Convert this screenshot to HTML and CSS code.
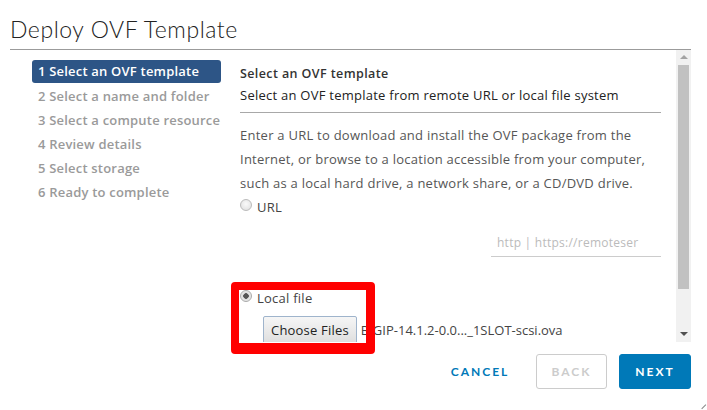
FILE: index.html
```html
<!DOCTYPE html>
<html>
<head>
<meta charset="utf-8">
<link rel="stylesheet" href="styles.css">
</head>
<body>
<div class="dialog">
  <header class="title">Deploy OVF Template</header>
  <div class="main">
    <nav class="steps">
      <div class="step active">1 Select an OVF template</div>
      <div class="step">2 Select a name and folder</div>
      <div class="step">3 Select a compute resource</div>
      <div class="step">4 Review details</div>
      <div class="step">5 Select storage</div>
      <div class="step">6 Ready to complete</div>
    </nav>
    <section class="panel">
      <div class="scroll">
        <div class="content">
          <h2 class="heading">Select an OVF template</h2>
          <p class="subtitle">Select an OVF template from remote URL or local file system</p>
          <p class="desc">Enter a URL to download and install the OVF package from the Internet, or browse to a location accessible from your computer, such as a local hard drive, a network share, or a CD/DVD drive.</p>
          <label class="radio-row"><span class="radio"></span>URL</label>
          <div class="url-row"><div class="url-input">http | https://remoteser</div></div>
          <label class="radio-row local"><span class="radio checked"></span>Local file</label>
          <div class="file-row"><span class="file-btn">Choose Files</span><span class="file-name">BIGIP-14.1.2-0.0..._1SLOT-scsi.ova</span></div>
        </div>
      </div>
      <div class="scrollbar">
        <span class="arrow up"></span>
        <div class="thumb"></div>
        <span class="arrow down"></span>
      </div>
    </section>
  </div>
  <footer class="actions">
    <button class="btn flat">CANCEL</button>
    <button class="btn outline">BACK</button>
    <button class="btn primary">NEXT</button>
  </footer>
  <div class="highlight"></div>
  <div class="resize"></div>
</div>
</body>
</html>
```
FILE: styles.css
```css
* { box-sizing: border-box; }
html, body { margin: 0; padding: 0; background: #fff; }
body { font-family: "Open Sans", Lato, sans-serif; color: #333; }
.dialog { position: relative; width: 707px; height: 410px; padding: 0 16px 0 10px; overflow: hidden; }
.title {
  height: 50px; border-bottom: 1px solid #9b9b9b; font-family: Lato, sans-serif;
  font-size: 23px; font-weight: 300; color: #222; padding-top: 15px; line-height: 28px; letter-spacing: 0.55px;
}
.main { display: flex; height: 292px; }
.steps { width: 189px; margin-left: 22px; margin-top: 10px; display: flex; flex-direction: column; }
.step { height: 24px; line-height: 24px; padding-left: 6px; font-size: 13px; font-weight: 600; color: #9a9a9a; white-space: nowrap; letter-spacing: 0.2px; }
.step.active { background: #2d5586; color: #fff; border-radius: 3px; height: 23px; line-height: 23px; margin-bottom: 1px; }
.panel { flex: 1; margin-left: 9px; display: flex; }
.scroll { flex: 1; overflow: hidden; }
.content { padding: 15px 15px 0 10px; letter-spacing: 0.25px; }
.heading { margin: 0; font-size: 12.5px; font-weight: 600; color: #333; line-height: 18px; letter-spacing: 0.4px; }
.subtitle { margin: 3px 0 0; font-size: 13px; color: #222; line-height: 18px; padding-bottom: 8px; border-bottom: 1px solid #a8a8a8; }
.desc { margin: 10px 0 0; font-size: 13px; color: #565656; line-height: 24px; }
.radio-row { display: flex; align-items: center; font-size: 13px; color: #444; height: 16px; margin-top: 4px; }
.radio {
  width: 12px; height: 12px; border-radius: 50%; margin-right: 5px; margin-top: -4px;
  border: 1px solid #bbb; background: radial-gradient(circle at 50% 40%, #fafafa, #ddd);
}
.radio.checked { background: radial-gradient(circle, #555 0 2.5px, #ddd 3px, #f4f4f4); border-color: #aaa; }
.url-row { display: flex; justify-content: flex-end; margin-top: 19px; }
.url-input { width: 170px; height: 23px; border-bottom: 1px solid #ccc; font-size: 12px; color: #bbb; padding-left: 6px; line-height: 18px; white-space: nowrap; overflow: hidden; }
.radio-row.local { margin-top: 33px; }
.file-row { display: flex; align-items: center; margin-top: 10px; padding-left: 23px; }
.file-btn {
  height: 28px; padding: 0 7px; font-size: 13px; color: #222; line-height: 26px; white-space: nowrap; letter-spacing: 0.2px;
  border: 1px solid #9fb4cc; border-radius: 2px; background: linear-gradient(#f6f6f6, #dedede);
}
.file-name { margin-left: 4px; font-size: 13px; color: #444; white-space: nowrap; letter-spacing: 0; }
.scrollbar { width: 15px; background: #f1f1f1; display: flex; flex-direction: column; align-items: center; }
.arrow { width: 0; height: 0; border-left: 4px solid transparent; border-right: 4px solid transparent; margin: 5px 0; }
.arrow.up { border-bottom: 4px solid #a3a3a3; }
.arrow.down { border-top: 4px solid #505050; margin-top: auto; margin-bottom: 6px; }
.thumb { width: 11px; height: 224px; background: #c1c1c1; margin-top: 1px; }
.actions { display: flex; justify-content: flex-end; align-items: center; gap: 12px; margin-top: 12px; }
.btn {
  height: 35px; font-family: Lato, sans-serif; font-size: 12px; font-weight: 700; letter-spacing: 2px;
  border-radius: 3px; padding: 0; cursor: pointer;
}
.btn.flat { background: none; border: none; color: #0079b8; width: 72px; margin-right: 8px; }
.btn.outline { background: #fff; border: 1px solid #ccc; color: #ccc; width: 71px; }
.btn.primary { background: #0079b8; border: 1px solid #0079b8; color: #fff; width: 72px; }
.highlight {
  position: absolute; left: 231px; top: 282px; width: 144px; height: 72px;
  border: 8px solid #ff0000; border-width: 8px 9px 11px 8px; border-radius: 4px;
}
.resize { position: absolute; right: 2px; bottom: 2px; width: 6px; height: 6px; border-right: 1px solid #888; transform: rotate(45deg); }
```
